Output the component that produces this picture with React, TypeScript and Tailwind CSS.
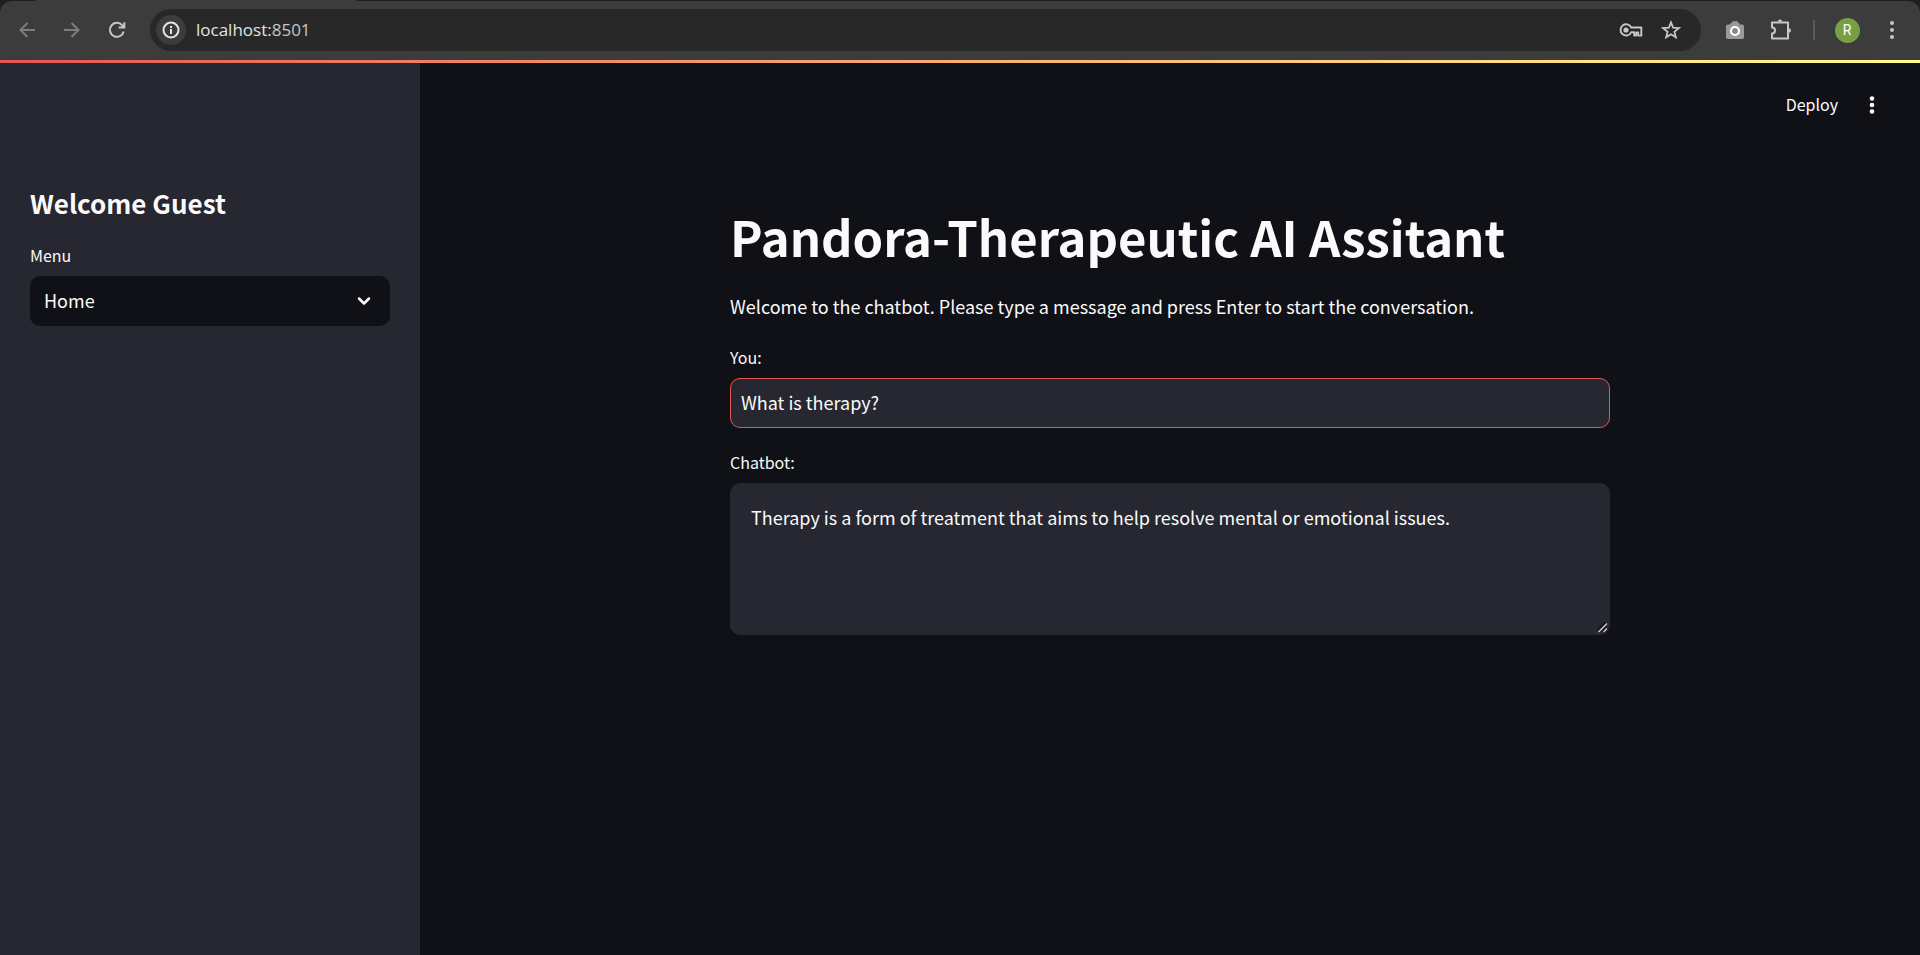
import { useState } from "react";

const iconButton = "flex h-9 w-9 items-center justify-center rounded-full";

function BrowserBar() {
  return (
    <div className="bg-[#1f1f1f]">
      <div className="mx-auto ml-9 h-px w-80 bg-[#3c3c3c]" />
      <header className="flex h-[59px] items-center rounded-t-xl bg-[#3c3c3c] pr-[10px] pb-px pl-[9px] text-[#c7c7c7]">
        <nav className="flex gap-[9px]" aria-label="Browser navigation">
          <button className={iconButton + " text-[#7d7d7d]"} aria-label="Back">
            <svg width="20" height="20" viewBox="0 0 20 20" fill="none" stroke="currentColor" strokeWidth="2">
              <path d="M18 10H4M10.500 3L3.500 10l7 7" />
            </svg>
          </button>
          <button className={iconButton + " text-[#7d7d7d]"} aria-label="Forward">
            <svg width="20" height="20" viewBox="0 0 20 20" fill="none" stroke="currentColor" strokeWidth="2">
              <path d="M2 10h14M9.500 3l7 7-7 7" />
            </svg>
          </button>
          <button className={iconButton} aria-label="Reload">
            <svg width="20" height="20" viewBox="0 0 20 20" fill="none" stroke="currentColor" strokeWidth="2">
              <path d="M16.700 11.500A7 7 0 1 1 15.200 5.200L17 7M17.300 2.300v5.200h-5.600" />
            </svg>
          </button>
        </nav>

        <div className="ml-[15px] flex h-[42px] flex-1 items-center rounded-full bg-[#282828] pr-3 pl-[6px]">
          <button className="flex h-[30px] w-[30px] items-center justify-center rounded-full bg-[#3c3c3c] text-[#e3e3e3]" aria-label="Site information">
            <svg width="18" height="18" viewBox="0 0 18 18" fill="none" stroke="currentColor" strokeWidth="2">
              <circle cx="9" cy="9" r="7.500" />
              <path d="M9 8v5M9 5v2" />
            </svg>
          </button>
          <a href="http://localhost:8501" className="ml-[10px] font-['Open_Sans',sans-serif] text-[17px] leading-6 text-[#e3e3e3]">
            localhost:<span className="text-[#c7c7c7]">8501</span>
          </a>
          <div className="ml-auto flex gap-1">
            <button className={iconButton} aria-label="Passwords">
              <svg width="24" height="16" viewBox="0 0 24 16" fill="none" stroke="currentColor" strokeWidth="1.900">
                <path d="M12.200 5.500A5.600 5.600 0 1 0 12.200 10.300H15.200V13.600H17.200V10.500H19.200V13.600H22.300V5.500Z" strokeLinejoin="round" />
                <circle cx="7" cy="8" r="2.600" fill="currentColor" stroke="none" />
              </svg>
            </button>
            <button className={iconButton} aria-label="Bookmark">
              <svg width="20" height="20" viewBox="0 0 20 20" fill="none" stroke="currentColor" strokeWidth="1.800">
                <path d="M10 2.400l2.100 5.300 5.700.4-4.400 3.700 1.400 5.500L10 14.300l-4.800 3 1.400-5.500-4.400-3.700 5.700-.4z" />
              </svg>
            </button>
          </div>
        </div>

        <div className="ml-4 flex items-center">
          <button className={iconButton} aria-label="Screenshot extension">
            <svg width="20" height="20" viewBox="0 0 20 20">
              <path d="M5.500 4.500V3.800A1.800 1.800 0 0 1 7 2.500l.5-1.300h5l.5 1.300a1.800 1.800 0 0 1 1.500 1.300v.7h2.700A1.800 1.800 0 0 1 19 6.300v10.900a1.800 1.800 0 0 1-1.800 1.800H2.800A1.800 1.800 0 0 1 1 17.200V6.300A1.800 1.800 0 0 1 2.800 4.500z" fill="#9a9a9a" />
              <circle cx="10" cy="11" r="4" fill="#8a8a8a" stroke="#ffffff" strokeWidth="2.200" />
            </svg>
          </button>
          <button className={iconButton + " ml-[10px]"} aria-label="Extensions">
            <svg width="22" height="22" viewBox="0 0 22 22" fill="none" stroke="currentColor" strokeWidth="2" strokeLinejoin="round">
              <path d="M2 3.500h16v16H2v-5a3 3 0 0 0 0-6z" />
              <path d="M7.800 2.800a2.200 2.200 0 0 1 4.400 0zM18.800 9.300a2.200 2.200 0 0 1 0 4.400z" fill="currentColor" stroke="none" />
            </svg>
          </button>
          <div className="mx-[14px] h-5 w-0.5 bg-[#5a5a5a]" />
          <button className={iconButton} aria-label="Profile">
            <span className="flex h-[25px] w-[25px] items-center justify-center rounded-full bg-[#7a9e46] font-[Roboto,sans-serif] text-[14px] text-white">R</span>
          </button>
          <button className={iconButton + " ml-[9px]"} aria-label="Browser menu">
            <svg width="6" height="20" viewBox="0 0 6 20" fill="currentColor">
              <circle cx="3" cy="3" r="2" />
              <circle cx="3" cy="10" r="2" />
              <circle cx="3" cy="17" r="2" />
            </svg>
          </button>
        </div>
      </header>
    </div>
  );
}

function Sidebar() {
  const [page, setPage] = useState("Home");
  return (
    <aside className="w-[420px] shrink-0 bg-[#262730] px-[30px] pt-[120px]">
      <h2 className="text-[26px] leading-10 font-semibold">Welcome Guest</h2>
      <label htmlFor="menu" className="mt-[19px] mb-2 block text-base leading-[26px]">
        Menu
      </label>
      <div className="relative">
        <select
          id="menu"
          value={page}
          onChange={(e) => setPage(e.target.value)}
          className="h-[50px] w-full appearance-none rounded-[10px] bg-[#101116] px-[14px] pb-0.5 text-lg leading-7 outline-none"
        >
          <option>Home</option>
        </select>
        <svg className="pointer-events-none absolute top-[18px] right-[19px]" width="14" height="14" viewBox="0 0 14 14" fill="none" stroke="currentColor" strokeWidth="2.500" strokeLinecap="round" strokeLinejoin="round">
          <path d="M2 4.500l5 5 5-5" />
        </svg>
      </div>
    </aside>
  );
}

export default function App() {
  const [message, setMessage] = useState("What is therapy?");
  return (
    <div className="flex min-h-screen flex-col bg-[#101116] font-['Noto_Sans_CJK_SC',sans-serif] text-[#fafafa]">
      <BrowserBar />
      <div className="h-[3px] bg-linear-to-r from-[#e65552] to-[#fffd8c]" />
      <div className="flex flex-1">
        <Sidebar />
        <main className="flex-1">
          <div className="flex h-[84px] items-center justify-end gap-[11px] pr-[30px]">
            <button className="px-[5px] pb-0.5 text-base leading-6">Deploy</button>
            <button className={iconButton} aria-label="Main menu">
              <svg width="6" height="18" viewBox="0 0 6 18" fill="currentColor">
                <circle cx="3" cy="2.500" r="2.300" />
                <circle cx="3" cy="9" r="2.300" />
                <circle cx="3" cy="15.500" r="2.300" />
              </svg>
            </button>
          </div>
          <div className="mx-auto w-full max-w-[880px] pt-[59px]">
            <h1 className="text-[49px] leading-[60px] font-bold">Pandora-Therapeutic AI Assitant</h1>
            <p className="mt-[25px] text-lg leading-[30px]">
              Welcome to the chatbot. Please type a message and press Enter to start the conversation.
            </p>
            <label htmlFor="you" className="mt-[23px] mb-2 block text-base leading-[26px]">
              You:
            </label>
            <input
              id="you"
              type="text"
              value={message}
              onChange={(e) => setMessage(e.target.value)}
              className="block h-[50px] w-full rounded-[10px] border border-[#e65552] bg-[#262730] px-[10px] pb-0.5 text-lg leading-7 outline-none"
            />
            <label htmlFor="chatbot" className="mt-[21px] mb-2 block text-base leading-[26px]">
              Chatbot:
            </label>
            <div className="relative">
              <textarea
                id="chatbot"
                defaultValue="Therapy is a form of treatment that aims to help resolve mental or emotional issues."
                className="block h-[152px] w-full resize-y rounded-[10px] border border-[#262730] bg-[#262730] px-5 pt-[19px] pb-5 text-lg leading-7 outline-none [&::-webkit-resizer]:hidden"
              />
              <svg className="pointer-events-none absolute right-0.5 bottom-0.5" width="11" height="11" viewBox="0 0 11 11" fill="none">
                <path d="M0.500 8.500L8.500 0.500M5.500 9.500L9.500 5.500" stroke="#101116" strokeWidth="1.500" />
                <path d="M1.500 10L10 1.500M6.500 10L10 6.500" stroke="#d0d0d0" strokeWidth="1.300" />
              </svg>
            </div>
          </div>
        </main>
      </div>
    </div>
  );
}
